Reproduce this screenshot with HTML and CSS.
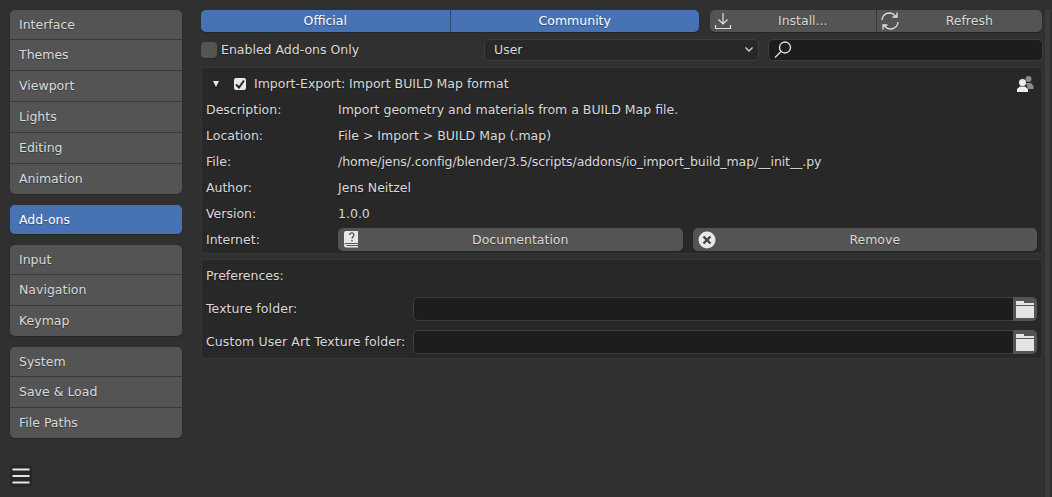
FILE: index.html
```html
<!DOCTYPE html>
<html lang="en">

<head>
    <meta charset="UTF-8">
    <title>Blender Preferences - Add-ons</title>
    <link rel="stylesheet" href="styles.css">
</head>

<body>
    <div class="window">
        <!-- Sidebar -->
        <nav class="sidebar">
            <div class="tab-group">
                <div class="tab">Interface</div>
                <div class="tab">Themes</div>
                <div class="tab">Viewport</div>
                <div class="tab">Lights</div>
                <div class="tab">Editing</div>
                <div class="tab">Animation</div>
            </div>
            <div class="tab-group">
                <div class="tab active">Add-ons</div>
            </div>
            <div class="tab-group">
                <div class="tab">Input</div>
                <div class="tab">Navigation</div>
                <div class="tab">Keymap</div>
            </div>
            <div class="tab-group">
                <div class="tab">System</div>
                <div class="tab">Save &amp; Load</div>
                <div class="tab">File Paths</div>
            </div>
            <div class="menu-button">
                <svg width="18" height="16" viewBox="0 0 18 16">
                    <path d="M0.500 1.500h17M0.500 8h17M0.500 14.500h17" stroke="#e6e6e6" stroke-width="2" fill="none" />
                </svg>
            </div>
        </nav>

        <!-- Main area -->
        <main class="content">
            <div class="toolbar">
                <div class="segmented source">
                    <div class="seg seg-on">Official</div>
                    <div class="seg seg-on">Community</div>
                </div>
                <div class="segmented actions">
                    <div class="seg seg-iconed">
                        <svg class="seg-icon" width="20" height="20" viewBox="0 0 20 20" fill="none" stroke="#e0e0e0" stroke-width="1.200">
                            <path d="M10 2v11M5.500 8.500 10 13l4.500-4.500M2.500 14v3.500h15V14" />
                        </svg>
                        Install...
                    </div>
                    <div class="seg seg-iconed">
                        <svg class="seg-icon" width="20" height="20" viewBox="0 0 20 20" fill="none" stroke="#e0e0e0" stroke-width="1.300">
                            <path d="M2 9a7.500 7.500 0 0 1 13-4.500L17 6M17 1.500V6h-4.500M18 11a7.500 7.500 0 0 1-13 4.500L3 14M3 18.500V14h4.500" />
                        </svg>
                        Refresh
                    </div>
                </div>
            </div>

            <div class="filters">
                <label class="only-enabled"><span class="check-off"></span>Enabled Add-ons Only</label>
                <div class="select">User
                    <svg width="8" height="5" viewBox="0 0 8 5" fill="none" stroke="#d8d8d8" stroke-width="1.300">
                        <path d="M0.500 0.500 4 4l3.500-3.500" />
                    </svg>
                </div>
                <div class="search">
                    <svg width="20" height="20" viewBox="0 0 20 20" fill="none" stroke="#e6e6e6" stroke-width="1.300">
                        <circle cx="12" cy="7.500" r="5.500" />
                        <path d="M8 11.500 2 17.500" />
                    </svg>
                </div>
            </div>

            <!-- Add-on details -->
            <section class="box addon">
                <div class="addon-head">
                    <span class="arrow"></span>
                    <span class="check-on">
                        <svg width="10" height="10" viewBox="0 0 10 10" fill="none" stroke="#222" stroke-width="2">
                            <path d="M1 5.500 4 8.500 9 1.500" />
                        </svg>
                    </span>
                    <span class="addon-title">Import-Export: Import BUILD Map format</span>
                    <svg class="user-icon" width="18" height="18" viewBox="0 0 18 18">
                        <circle cx="12.500" cy="4" r="3" fill="#8a8a8a" />
                        <path d="M10 8h5l2.500 3v3H12z" fill="#8a8a8a" />
                        <circle cx="6.500" cy="7.500" r="3.500" fill="#eee" />
                        <path d="M1 17v-3l3-2.500h5l3 2.500v3z" fill="#eee" />
                    </svg>
                </div>
                <div class="info-row"><span class="info-label">Description:</span>Import geometry and materials from a BUILD Map file.</div>
                <div class="info-row"><span class="info-label">Location:</span>File &gt; Import &gt; BUILD Map (.map)</div>
                <div class="info-row"><span class="info-label">File:</span><span class="file-path">/home/jens/.config/blender/3.5/scripts/addons/io_import_build_map/__init__.py</span></div>
                <div class="info-row"><span class="info-label">Author:</span>Jens Neitzel</div>
                <div class="info-row"><span class="info-label">Version:</span>1.0.0</div>
                <div class="info-row">
                    <span class="info-label">Internet:</span>
                    <div class="link-buttons">
                        <div class="button">
                            <svg class="button-icon" width="16" height="17" viewBox="0 0 16 17">
                                <path d="M3 0h12v12H3a2 2 0 0 0-2 2V2a2 2 0 0 1 2-2z" fill="#e8e8e8" />
                                <path d="M1 14.500a1.500 1.500 0 0 1 2-1.500h12v1H3.500v1H15v1.500H3a2 2 0 0 1-2-2z" fill="#e8e8e8" />
                                <path d="M6.500 4a2.200 2.200 0 1 1 3.500 1.800c-.8.600-1 1-1 2M9 9v1.500" fill="none" stroke="#444" stroke-width="1.200" />
                            </svg>
                            Documentation
                        </div>
                        <div class="button">
                            <svg class="button-icon" width="18" height="18" viewBox="0 0 18 18">
                                <circle cx="9" cy="9" r="8.500" fill="#e8e8e8" />
                                <path d="M5.500 5.500l7 7M12.500 5.500l-7 7" stroke="#444" stroke-width="2.400" />
                            </svg>
                            Remove
                        </div>
                    </div>
                </div>
            </section>

            <!-- Add-on preferences -->
            <section class="box prefs">
                <div class="prefs-title">Preferences:</div>
                <div class="path-row">
                    <span class="path-label">Texture folder:</span>
                    <div class="path-input"></div>
                    <div class="folder-button">
                        <svg width="18" height="17" viewBox="0 0 18 17">
                            <path d="M0 0h8v2h10v2H0zM0 5h18v12H0z" fill="#e4e4e4" />
                        </svg>
                    </div>
                </div>
                <div class="path-row">
                    <span class="path-label">Custom User Art Texture folder:</span>
                    <div class="path-input"></div>
                    <div class="folder-button">
                        <svg width="18" height="17" viewBox="0 0 18 17">
                            <path d="M0 0h8v2h10v2H0zM0 5h18v12H0z" fill="#e4e4e4" />
                        </svg>
                    </div>
                </div>
            </section>
        </main>

        <div class="scrollbar"></div>
    </div>
</body>

</html>
```

FILE: styles.css
```css
* {
    box-sizing: border-box;
}

body {
    margin: 0;
    background-color: #303030;
    color: #d9d9d9;
    font-family: "DejaVu Sans", sans-serif;
    font-size: 12.5px;
    text-shadow: 0 1px 1px rgba(0, 0, 0, 0.35);
}

.window {
    display: flex;
    height: 497px;
    overflow: hidden;
    padding: 10px 0 0 10px;
}

/* Sidebar */
.sidebar {
    width: 172px;
    flex: none;
    display: flex;
    flex-direction: column;
    gap: 11px;
    position: relative;
}

.tab-group {
    background: #545454;
    border-radius: 5px;
    box-shadow: 0 1px 1px #262626;
    overflow: hidden;
}

.tab {
    height: 31px;
    padding-left: 9px;
    line-height: 29px;
    border-bottom: 1px solid #3a3a3a;
}

.tab:first-child {
    height: 30px;
}

.tab:last-child {
    height: 30px;
    border-bottom: none;
}

.tab.active {
    height: 29px;
    background: #4772b3;
    color: #fff;
}

.menu-button {
    position: absolute;
    left: 0;
    top: 455px;
    width: 22px;
    height: 22px;
    border-radius: 4px;
    background: #282828;
    display: flex;
    align-items: center;
    justify-content: center;
}

/* Main */
.content {
    width: 842px;
    margin-left: 19px;
    flex: none;
}

.toolbar {
    display: flex;
    gap: 10px;
    height: 22px;
}

.segmented {
    display: flex;
    border-radius: 5px;
    overflow: hidden;
    box-shadow: 0 1px 1px #262626;
}

.source {
    width: 498px;
}

.actions {
    width: 332px;
    margin-left: 1px;
}

.seg {
    flex: 1;
    position: relative;
    display: flex;
    align-items: center;
    justify-content: center;
    background: #545454;
    border-right: 1px solid #3a3a3a;
    padding-bottom: 1px;
}

.seg:last-child {
    border-right: none;
}

.seg-on {
    background: #4772b3;
    color: #fff;
    border-right-color: #2f4a75;
}

.seg-iconed {
    padding-left: 20px;
}

.seg-icon {
    position: absolute;
    left: 3px;
    top: 1px;
}

.filters {
    display: flex;
    align-items: center;
    height: 22px;
    margin-top: 7px;
}

.only-enabled {
    width: 283px;
    display: flex;
    align-items: center;
    gap: 4px;
    padding-bottom: 1px;
}

.check-off {
    width: 16px;
    height: 16px;
    border-radius: 4px;
    background: #545454;
    box-shadow: 0 1px 1px #262626;
}

.select {
    width: 275px;
    height: 22px;
    margin-right: 9px;
    padding: 0 5px 1px 9px;
    display: flex;
    align-items: center;
    justify-content: space-between;
    background: #282828;
    border: 1px solid #3d3d3d;
    border-radius: 5px;
}

.search {
    width: 275px;
    height: 22px;
    padding-left: 4px;
    display: flex;
    align-items: center;
    background: #1d1d1d;
    border: 1px solid #3d3d3d;
    border-radius: 5px;
}

.box {
    background: #282828;
    border: 1px solid #363636;
    border-radius: 5px;
}

.addon {
    height: 187px;
    margin-top: 6px;
    padding: 3px 5px 0 4px;
}

.addon-head {
    display: flex;
    align-items: center;
    height: 25px;
    position: relative;
    margin-bottom: 1px;
}

.arrow {
    width: 0;
    height: 0;
    margin-left: 7px;
    border-left: 3.500px solid transparent;
    border-right: 3.500px solid transparent;
    border-top: 6px solid #e8e8e8;
}

.check-on {
    width: 12px;
    height: 12px;
    margin-left: 15px;
    border-radius: 2px;
    background: #e8e8e8;
    display: flex;
    align-items: center;
    justify-content: center;
}

.addon-title {
    margin-left: 8px;
}

.user-icon {
    position: absolute;
    right: 3px;
    top: 4px;
}

.info-row {
    display: flex;
    align-items: center;
    height: 26px;
    padding-bottom: 1px;
}

.info-label {
    width: 132px;
    flex: none;
}

.file-path {
    letter-spacing: -0.08px;
}

.link-buttons {
    flex: 1;
    display: flex;
    gap: 10px;
}

.button {
    flex: 1;
    height: 23px;
    position: relative;
    display: flex;
    align-items: center;
    justify-content: center;
    padding-left: 20px;
    background: #545454;
    border-radius: 5px;
    box-shadow: 0 1px 1px #262626;
}

.button-icon {
    position: absolute;
    left: 5px;
    top: 3px;
}

.prefs {
    height: 100px;
    margin-top: 5px;
    padding: 3px 5px 0 4px;
}

.prefs-title {
    height: 25px;
    line-height: 26px;
}

.path-row {
    display: flex;
    align-items: center;
    height: 24px;
    margin-top: 9px;
}

.path-label {
    width: 207px;
    flex: none;
    padding-bottom: 2px;
    letter-spacing: 0.08px;
}

.path-input {
    flex: 1;
    height: 24px;
    background: #1d1d1d;
    border: 1px solid #3d3d3d;
    border-right: none;
    border-radius: 5px 0 0 5px;
}

.folder-button {
    width: 24px;
    height: 24px;
    background: #545454;
    border-radius: 0 5px 5px 0;
    display: flex;
    align-items: center;
    justify-content: center;
}

.scrollbar {
    width: 5px;
    height: 100%;
    margin-left: 2px;
    background: #3b3b3b;
}
```
